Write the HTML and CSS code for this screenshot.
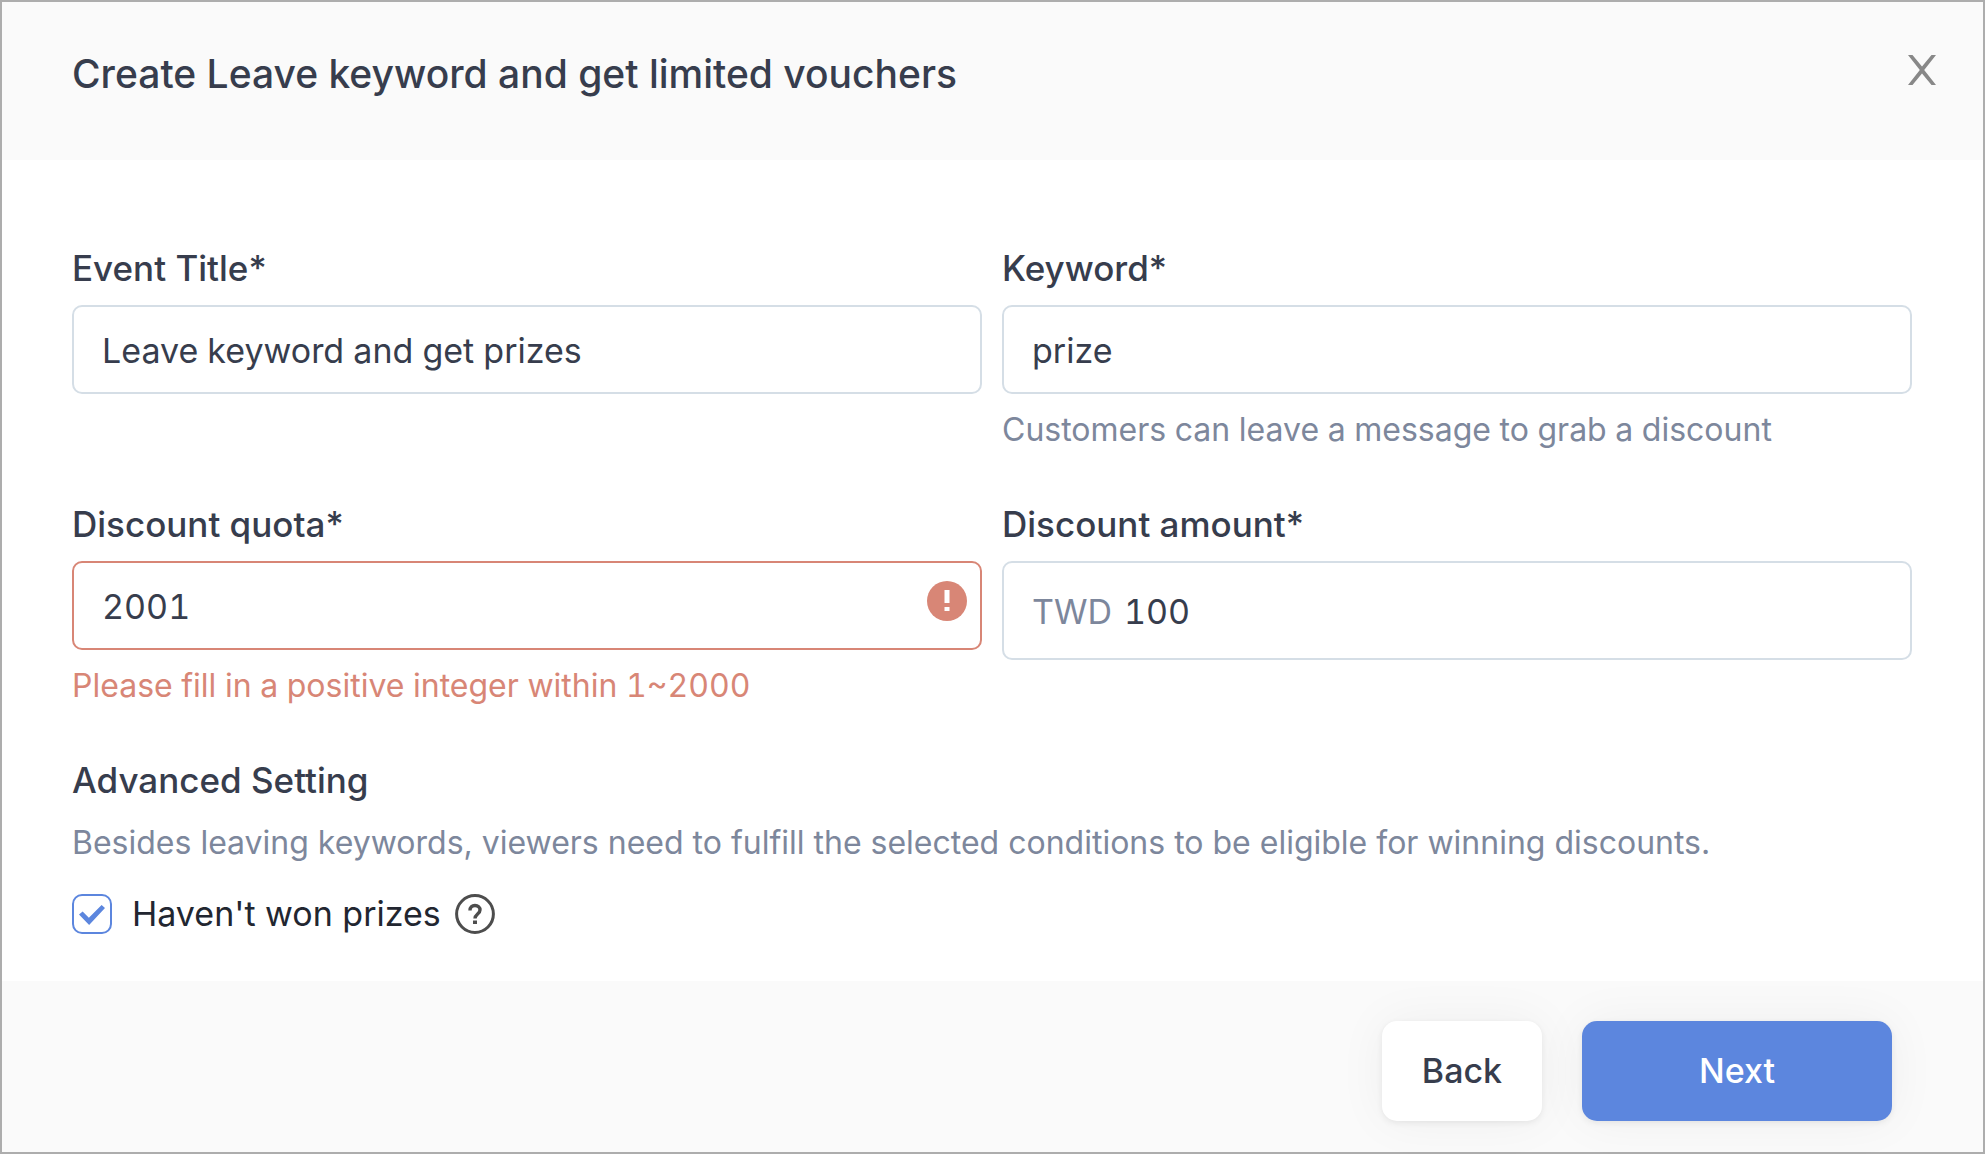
FILE: index.html
```html
<!DOCTYPE html>
<html lang="en">
<head>
    <meta charset="UTF-8">
    <meta name="viewport" content="width=device-width, initial-scale=1.0">
    <title>Create Leave keyword and get limited vouchers</title>
    <link rel="stylesheet" href="styles.css">
</head>
<body>
    <form class="dialog">
        <header class="dialog-header">
            <h1>Create Leave keyword and get limited vouchers</h1>
            <button type="button" class="close" aria-label="Close">
                <svg viewBox="0 0 30 30" width="30" height="30"><path d="M1 0h4.500L15 11.500 24.500 0H29L17.200 15 29 30h-4.500L15 18.500 5.500 30H1l11.800-15z" fill="#888"/></svg>
            </button>
        </header>

        <main class="dialog-body">
            <div class="fields">
                <div class="field">
                    <label for="event-title">Event Title*</label>
                    <div class="control">
                        <input type="text" id="event-title" value="Leave keyword and get prizes">
                    </div>
                </div>

                <div class="field">
                    <label for="keyword">Keyword*</label>
                    <div class="control">
                        <input type="text" id="keyword" value="prize">
                    </div>
                    <p class="hint">Customers can leave a message to grab a discount</p>
                </div>

                <div class="field invalid">
                    <label for="quota">Discount quota*</label>
                    <div class="control">
                        <input type="text" id="quota" inputmode="numeric" value="2001" aria-invalid="true" aria-describedby="quota-error">
                        <svg class="error-icon" viewBox="0 0 40 40" width="40" height="40"><circle cx="20" cy="20" r="20" fill="#d88676"/><path d="M17.500 9h5v13h-5zM17.500 26h5v4h-5z" fill="#fff"/></svg>
                    </div>
                    <p class="hint" id="quota-error">Please fill in a positive integer within 1~2000</p>
                </div>

                <div class="field">
                    <label for="amount">Discount amount*</label>
                    <div class="control control-prefix">
                        <span class="prefix">TWD</span>
                        <input type="text" id="amount" inputmode="numeric" value="100">
                    </div>
                </div>
            </div>

            <section class="advanced">
                <h2>Advanced Setting</h2>
                <p class="hint">Besides leaving keywords, viewers need to fulfill the selected conditions to be eligible for winning discounts.</p>
                <div class="option">
                    <input type="checkbox" id="not-won" checked>
                    <label for="not-won">Haven't won prizes</label>
                    <button type="button" class="help" aria-label="Help">
                        <svg viewBox="0 0 40 40" width="40" height="40" fill="none" stroke="#4d4d4d"><circle cx="20" cy="20" r="18.400" stroke-width="3"/><path d="M15 16.500c0-3.500 2-5 5-5s5 1.800 5 4.500c0 4-5 4-5 8.500" stroke-width="3.400"/><path d="M18 26.500h4v3.500h-4z" fill="#4d4d4d" stroke="none"/></svg>
                    </button>
                </div>
            </section>
        </main>

        <footer class="dialog-footer">
            <button type="button" class="btn">Back</button>
            <button type="submit" class="btn btn-primary">Next</button>
        </footer>
    </form>
</body>
</html>
```
FILE: styles.css
```css
* {
    box-sizing: border-box;
    margin: 0;
    padding: 0;
}

body {
    font-family: Inter, "Liberation Sans", sans-serif;
    font-size: 34px;
    line-height: 46px;
    color: #373d4d;
    background-color: #fff;
}

button, input {
    font: inherit;
    color: inherit;
}

button {
    border: none;
    background: none;
    cursor: pointer;
}

svg {
    display: block;
}

.dialog {
    display: flex;
    flex-direction: column;
    min-height: 100vh;
    border: 2px solid #adadad;
}

.dialog-header {
    display: flex;
    justify-content: space-between;
    align-items: flex-start;
    padding: 48px 46px 62px 70px;
    background-color: #fafafa;
}

.dialog-header h1 {
    font-size: 39px;
    line-height: 48px;
    font-weight: 500;
}

.close {
    padding-top: 5px;
}

.dialog-body {
    flex: 1;
    padding: 85px 71px 44px 70px;
}

.fields {
    display: grid;
    grid-template-columns: 1fr 1fr;
    gap: 51px 20px;
}

.field label, .advanced h2 {
    display: block;
    font-size: 35px;
    font-weight: 500;
}

.field label {
    margin-bottom: 14px;
}

.control {
    display: flex;
    height: 89px;
    border: 2px solid #d5dee6;
    border-radius: 10px;
    background-color: #fff;
}

.control input {
    flex: 1;
    min-width: 0;
    padding: 2px 28px 0;
    border: none;
    border-radius: 10px;
    outline: none;
    background: none;
    font-variant-numeric: tabular-nums;
}

.control-prefix {
    height: 99px;
    align-items: center;
    padding-left: 28px;
}

.control-prefix input {
    padding-left: 12px;
}

.prefix {
    padding-top: 2px;
    color: #7d879c;
}

.hint {
    font-size: 32px;
    line-height: 40px;
    color: #7d879c;
}

.field .hint {
    margin-top: 16px;
    font-variant-numeric: tabular-nums;
}

.invalid .control {
    border-color: #d88676;
}

.invalid .hint {
    color: #d88676;
}

.error-icon {
    margin: 18px 13px 0 0;
}

.advanced {
    margin-top: 51px;
}

.advanced .hint {
    margin-top: 20px;
}

.option {
    display: flex;
    align-items: center;
    margin-top: 28px;
    color: #222630;
}

.option input {
    appearance: none;
    width: 40px;
    height: 40px;
    margin-right: 20px;
    border: 2px solid #5c86de;
    border-radius: 10px;
    background-color: #fff;
}

.option input:checked::before {
    content: "";
    display: block;
    width: 26px;
    height: 20px;
    margin: 9px 5px;
    background-color: #5c86de;
    clip-path: polygon(0 48%, 14% 32%, 38% 64%, 87% 0, 100% 15%, 39% 100%);
}

.help {
    margin-left: 14px;
}

.dialog-footer {
    display: flex;
    justify-content: flex-end;
    gap: 40px;
    padding: 40px 91px 31px 70px;
    background-color: #fafafa;
}

.btn {
    min-width: 160px;
    height: 100px;
    padding: 0 38px;
    border-radius: 15px;
    font-weight: 500;
    background-color: #fff;
    box-shadow: 0 2px 6px rgba(0, 0, 0, 0.07), 0 0 50px rgba(0, 0, 0, 0.05);
}

.btn-primary {
    min-width: 310px;
    color: #fff;
    background-color: #5c86de;
}
```
